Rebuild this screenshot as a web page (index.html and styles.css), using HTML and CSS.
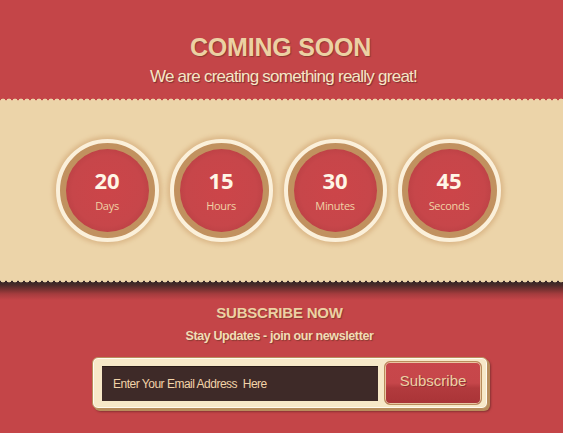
FILE: index.html
```html
<!DOCTYPE html>
<html>
<head>
<meta charset="utf-8">
<link rel="stylesheet" href="styles.css">
</head>
<body>
<header class="hero">
  <h1 class="title">COMING SOON</h1>
  <p class="tagline">We are creating something really great!</p>
</header>
<section class="band">
  <div class="timer">
    <div class="ring"><div class="disc"><span class="num">20</span><span class="unit">Days</span></div></div>
    <div class="ring"><div class="disc"><span class="num">15</span><span class="unit">Hours</span></div></div>
    <div class="ring"><div class="disc"><span class="num">30</span><span class="unit">Minutes</span></div></div>
    <div class="ring"><div class="disc"><span class="num">45</span><span class="unit">Seconds</span></div></div>
  </div>
</section>
<section class="subscribe">
  <h2 class="sub-title">SUBSCRIBE NOW</h2>
  <p class="sub-text">Stay Updates - join our newsletter</p>
  <form class="form">
    <div class="field">Enter Your Email Address&nbsp; Here</div>
    <button type="button" class="btn">Subscribe</button>
  </form>
</section>
</body>
</html>
```
FILE: styles.css
```css
html, body {
  margin: 0;
  padding: 0;
}
body {
  width: 563px;
  height: 433px;
  overflow: hidden;
  background: #c44548;
  font-family: "Liberation Sans", Arial, sans-serif;
}
.hero {
  text-align: center;
  padding-top: 34px;
  height: 101px;
  box-sizing: border-box;
}
.title {
  margin: 0 0 0 -2px;
  font-size: 25px;
  line-height: 26px;
  font-weight: bold;
  color: #ecd1a3;
  letter-spacing: -0.2px;
  text-shadow: 1px 1px 1px #8a3a32;
}
.tagline {
  margin: 7px 0 0 4px;
  font-size: 17px;
  line-height: 20px;
  letter-spacing: -0.75px;
  color: #f6e6c6;
  text-shadow: 1px 1px 1px #7a3030;
}
.band {
  position: relative;
  height: 179px;
  background: #ecd4a9;
  display: flex;
  align-items: center;
  justify-content: center;
}
.band::before {
  content: "";
  position: absolute;
  left: 0;
  right: 0;
  top: -3px;
  height: 3px;
  background: radial-gradient(circle at 3px 3.5px, #ecd4a9 2.6px, rgba(236,212,169,0) 3.2px) 0 0 / 6px 3px repeat-x;
}
.band::after {
  content: "";
  position: absolute;
  left: 0;
  right: 0;
  top: 100%;
  height: 20px;
  background:
    radial-gradient(circle at 3px -0.5px, #ecd4a9 2.6px, rgba(236,212,169,0) 3.2px) 0 0 / 6px 3px repeat-x,
    linear-gradient(#2e2626 0, #4a2a29 5px, #7d3232 10px, #a53c3e 14px, rgba(196,69,72,0) 20px);
}
.timer {
  display: flex;
  gap: 11px;
  margin-left: -7px;
}
.ring {
  width: 95px;
  height: 95px;
  border-radius: 50%;
  border: 4px solid #fbf0da;
  background: #c1915f;
  box-shadow: 0 0 4px 3px #dcb98a;
  display: flex;
  align-items: center;
  justify-content: center;
}
.disc {
  width: 83px;
  height: 83px;
  border-radius: 50%;
  background: radial-gradient(circle at 50% 50%, #cc4549 0, #c7464a 60%, #a9393c 100%);
  display: flex;
  flex-direction: column;
  align-items: center;
  justify-content: center;
  font-family: "Open Sans", "Liberation Sans", sans-serif;
}
.num {
  font-size: 22px;
  font-weight: bold;
  line-height: 26px;
  color: #fff6e6;
  margin-top: -2px;
}
.unit {
  font-size: 11px;
  line-height: 14px;
  margin-top: 6px;
  color: #f0d2a5;
  letter-spacing: -0.3px;
}
.subscribe {
  text-align: center;
  padding-top: 24px;
}
.sub-title {
  margin: 0 0 0 -4px;
  font-size: 15px;
  line-height: 18px;
  font-weight: bold;
  color: #ecd1a3;
  letter-spacing: -0.2px;
  text-shadow: 1px 1px 1px #8a3a32;
}
.sub-text {
  margin: 6px 0 0 -4px;
  font-size: 12.5px;
  line-height: 16px;
  font-weight: bold;
  color: #f1dcb6;
  letter-spacing: -0.4px;
  text-shadow: 1px 1px 1px #8a3a32;
}
.form {
  margin: 13px 0 0 92px;
  width: 396px;
  height: 52px;
  box-sizing: border-box;
  display: flex;
  align-items: center;
  gap: 6px;
  padding: 4px 5px 4px 9px;
  background: #f7e8c8;
  border: 1px solid #b88d5c;
  border-radius: 6px;
  box-shadow: 2px 2px 0 #b88d5c, 3px 3px 2px rgba(80,30,30,.5), inset 0 0 0 1px #fffaf0;
}
.field {
  flex: 1;
  height: 35px;
  box-sizing: border-box;
  background: #3e2a28;
  border-top: 1px solid #2a1a18;
  color: #f2d3a8;
  font-size: 12px;
  letter-spacing: -0.5px;
  text-align: left;
  padding-left: 11px;
  display: flex;
  align-items: center;
}
.btn {
  width: 98px;
  height: 44px;
  border-radius: 6px;
  border: 1px solid #b98d5b;
  background: linear-gradient(#c8474b 0, #c6464a 50%, #b23a3d 62%, #a93437 100%);
  box-shadow: inset 0 0 0 1px #e9c7a3;
  color: #ecd0a4;
  font-family: "Liberation Sans", Arial, sans-serif;
  font-size: 15px;
  padding: 0 0 5px 0;
  text-shadow: 1px 1px 0 #8a3030;
}
```
